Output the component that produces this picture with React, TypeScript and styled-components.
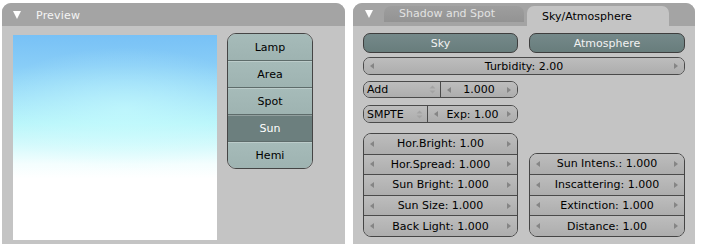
import React from 'react';
import styled, { createGlobalStyle, css } from 'styled-components';

const Global = createGlobalStyle`
  html, body { margin: 0; padding: 0; background: #ffffff; }
  body { font-family: "DejaVu Sans", "Liberation Sans", sans-serif; font-size: 11px; color: #000; }
  * { box-sizing: border-box; }
`;

const Page = styled.div`
  display: flex;
  gap: 8px;
  padding: 3px 0 0 2px;
  width: 701px;
  height: 249px;
`;

const Panel = styled.section<{ $w: number }>`
  width: ${p => p.$w}px;
  height: 241px;
  display: flex;
  flex-direction: column;
  background: #c4c4c4;
  border-radius: 9px 9px 0 0;
  overflow: hidden;
`;

const Header = styled.header`
  height: 23px;
  flex: none;
  background: #a4a4a4;
  display: flex;
  align-items: center;
  position: relative;
`;

const Triangle = styled.span`
  width: 0;
  height: 0;
  border-left: 4.5px solid transparent;
  border-right: 4.5px solid transparent;
  border-top: 8px solid #ffffff;
  margin: 1px 15px 0 11px;
`;

const Title = styled.span`
  color: #f4f4f4;
  font-size: 11px;
  letter-spacing: 0.2px;
  margin-top: 1px;
`;

const TabBar = styled.div`
  display: flex;
  align-self: flex-end;
  gap: 3px;
  margin-left: 11px;
`;

const Tab = styled.div<{ $active?: boolean; $w: number }>`
  width: ${p => p.$w}px;
  padding-left: 15px;
  display: flex;
  align-items: center;
  border-radius: 7px 7px 0 0;
  ${p =>
    p.$active
      ? css`
          height: 20px;
          background: #c4c4c4;
          color: #000;
        `
      : css`
          height: 16px;
          background: linear-gradient(#9e9e9e, #939393);
          color: #e2e2e2;
          padding-bottom: 1px;
        `}
`;

const RightHeaderTri = styled(Triangle)`
  align-self: flex-start;
  margin: 7px 0 0 12px;
`;

/* ---------- Preview panel ---------- */

const PreviewBody = styled.div`
  display: flex;
  gap: 10px;
  padding: 7px 0 0 11px;
`;

const Sky = styled.div`
  width: 204px;
  height: 205px;
  margin-top: 2px;
  background:
    radial-gradient(ellipse 90% 40% at 55% 36%, rgba(205, 255, 255, 0.5), rgba(205, 255, 255, 0) 75%),
    linear-gradient(to bottom, #78c1f6 0%, #88cdf7 15%, #a2e2f9 30%, #b8f5fa 43%, #d6fafc 54%, #f4fefe 63%, #ffffff 70%, #ffffff 100%);
`;

const LampGroup = styled.div`
  width: 86px;
  height: 136px;
  display: flex;
  flex-direction: column;
  border: 1px solid #454545;
  border-radius: 9px;
  overflow: hidden;
`;

const LampButton = styled.div<{ $active?: boolean }>`
  flex: 1;
  display: flex;
  align-items: center;
  justify-content: center;
  font-size: 11px;
  padding-top: 1px;
  ${p =>
    p.$active
      ? css`
          background: #6c7f7e;
          color: #ffffff;
        `
      : css`
          background: linear-gradient(#a6bbb9, #9eb3b1);
          color: #000;
        `}
  & + & {
    border-top: 1px solid #5e6c6b;
    box-shadow: inset 0 1px 0 rgba(255, 255, 255, 0.25);
  }
`;

/* ---------- Sky panel ---------- */

const SkyBody = styled.div`
  display: flex;
  flex-direction: column;
  padding: 7px 10px 0 10px;
`;

const TwoCol = styled.div`
  display: grid;
  grid-template-columns: 155px 156px;
  column-gap: 11px;
`;

const Toggle = styled.div`
  height: 20px;
  border: 1px solid #3e3e3e;
  border-radius: 7px;
  background: linear-gradient(#75898a, #687d7c);
  color: #f2f2f2;
  display: flex;
  align-items: center;
  justify-content: center;
`;

const btnFill = css`
  background: linear-gradient(#bdbdbd, #adadad);
`;

const Arrow = styled.span<{ $dir: 'l' | 'r' }>`
  width: 0;
  height: 0;
  border-top: 3.5px solid transparent;
  border-bottom: 3.5px solid transparent;
  ${p =>
    p.$dir === 'l'
      ? css`border-right: 4px solid #858585;`
      : css`border-left: 4px solid #858585;`}
  flex: none;
`;

const NumInner = styled.div<{ $pad?: number }>`
  flex: 1;
  height: 100%;
  display: flex;
  align-items: center;
  justify-content: space-between;
  padding: 0 ${p => p.$pad ?? 6}px;
  ${btnFill}
`;

const NumLabel = styled.span`
  flex: 1;
  text-align: center;
  white-space: nowrap;
`;

const Single = styled.div<{ $h: number; $mt: number; $w?: number }>`
  height: ${p => p.$h}px;
  margin-top: ${p => p.$mt}px;
  width: ${p => (p.$w ? `${p.$w}px` : 'auto')};
  border: 1px solid #4a4a4a;
  border-radius: 7px;
  overflow: hidden;
  display: flex;
`;

const Menu = styled.div<{ $w: number }>`
  width: ${p => p.$w}px;
  flex: none;
  height: 100%;
  display: flex;
  align-items: center;
  justify-content: space-between;
  padding: 0 4px 0 3px;
  border-right: 1px solid #4a4a4a;
  ${btnFill}
`;

const UpDown = () => (
  <svg width="7" height="9" viewBox="0 0 7 9">
    <path d="M3.5 0.5 L6.5 3.5 L0.5 3.5 Z" fill="#a3a3a3" />
    <path d="M3.5 8.5 L6.5 5.5 L0.5 5.5 Z" fill="#a3a3a3" />
  </svg>
);

const Block = styled.div`
  margin-top: 10px;
  display: grid;
  grid-template-columns: 155px 156px;
  column-gap: 11px;
  align-items: end;
`;

const Group = styled.div<{ $h: number }>`
  height: ${p => p.$h}px;
  display: flex;
  flex-direction: column;
  border: 1px solid #454545;
  border-radius: 8px;
  overflow: hidden;
`;

const GroupRow = styled.div<{ $strong?: boolean }>`
  flex: 1;
  display: flex;
  & + & {
    border-top: 1px solid ${p => (p.$strong ? '#4a4a4a' : '#8e8e8e')};
  }
`;

const Num: React.FC<{ label: string; pad?: number }> = ({ label, pad }) => (
  <NumInner $pad={pad}>
    <Arrow $dir="l" />
    <NumLabel>{label}</NumLabel>
    <Arrow $dir="r" />
  </NumInner>
);

export default function App() {
  const left = ['Hor.Bright: 1.00', 'Hor.Spread: 1.000', 'Sun Bright: 1.000', 'Sun Size: 1.000', 'Back Light: 1.000'];
  const right = ['Sun Intens.: 1.000', 'Inscattering: 1.000', 'Extinction: 1.000', 'Distance: 1.00'];
  return (
    <>
      <Global />
      <Page>
        <Panel $w={343}>
          <Header>
            <Triangle />
            <Title>Preview</Title>
          </Header>
          <PreviewBody>
            <Sky />
            <LampGroup>
              <LampButton>Lamp</LampButton>
              <LampButton>Area</LampButton>
              <LampButton>Spot</LampButton>
              <LampButton $active>Sun</LampButton>
              <LampButton>Hemi</LampButton>
            </LampGroup>
          </PreviewBody>
        </Panel>
        <Panel $w={342}>
          <Header>
            <RightHeaderTri />
            <TabBar>
              <Tab $w={140}>Shadow and Spot</Tab>
              <Tab $w={142} $active>Sky/Atmosphere</Tab>
            </TabBar>
          </Header>
          <SkyBody>
            <TwoCol>
              <Toggle>Sky</Toggle>
              <Toggle>Atmosphere</Toggle>
            </TwoCol>
            <Single $h={18} $mt={4}>
              <Num label="Turbidity: 2.00" />
            </Single>
            <Single $h={17} $mt={6} $w={155}>
              <Menu $w={77}>
                <span>Add</span>
                <UpDown />
              </Menu>
              <Num label="1.000" />
            </Single>
            <Single $h={18} $mt={7} $w={155}>
              <Menu $w={64}>
                <span>SMPTE</span>
                <UpDown />
              </Menu>
              <Num label="Exp: 1.00" />
            </Single>
            <Block>
              <Group $h={104}>
                {left.map((l, i) => (
                  <GroupRow key={l} $strong={i === left.length - 1}>
                    <Num label={l} />
                  </GroupRow>
                ))}
              </Group>
              <Group $h={84}>
                {right.map((l, i) => (
                  <GroupRow key={l} $strong={i === right.length - 1}>
                    <Num label={l} />
                  </GroupRow>
                ))}
              </Group>
            </Block>
          </SkyBody>
        </Panel>
      </Page>
    </>
  );
}
